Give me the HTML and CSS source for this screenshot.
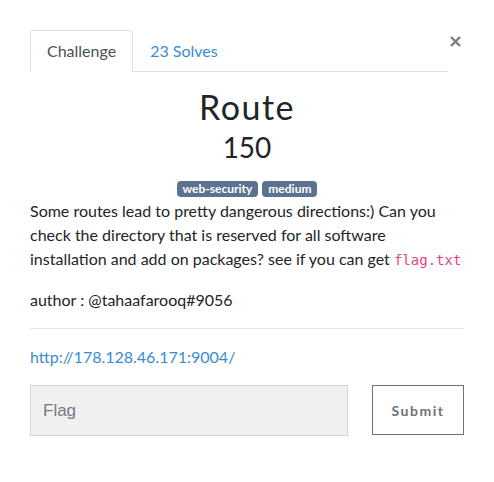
FILE: index.html
```html
<!DOCTYPE html>
<html>
<head>
<meta charset="utf-8">
<link rel="stylesheet" href="styles.css">
</head>
<body>
<div class="modal">
  <div class="head">
    <ul class="tabs">
      <li class="tab active">Challenge</li>
      <li class="tab"><a href="#">23 Solves</a></li>
    </ul>
    <button class="close" aria-label="Close">
      <svg width="11" height="11" viewBox="0 0 11 11"><path d="M1 1L10 10M10 1L1 10" stroke="#7d7d7d" stroke-width="2.4" stroke-linecap="butt"/></svg>
    </button>
  </div>
  <h2 class="title">Route</h2>
  <h3 class="value">150</h3>
  <div class="tags">
    <span class="badge">web-security</span>
    <span class="badge">medium</span>
  </div>
  <p class="desc">Some routes lead to pretty dangerous directions:) Can you check the directory that is reserved for all software installation and add on packages? see if you can get <code>flag.txt</code></p>
  <p class="desc">author : @tahaafarooq#9056</p>
  <hr class="sep">
  <a class="link" href="#">http://178.128.46.171:9004/</a>
  <form class="submit-row">
    <input class="flag" type="text" placeholder="Flag">
    <button class="btn" type="button">Submit</button>
  </form>
</div>
</body>
</html>
```
FILE: styles.css
```css
* { box-sizing: border-box; }
html, body { margin: 0; padding: 0; background: #fff; }
body { font-family: "Lato", "Liberation Sans", sans-serif; color: #212529; }
.modal { width: 494px; padding: 30px 30px 0 30px; }
.head { display: flex; align-items: flex-start; }
.tabs {
  list-style: none; margin: 0; padding: 0; display: flex;
  width: 420px; border-bottom: 1px solid #dee2e6;
}
.tab {
  font-size: 16px; line-height: 24px; padding: 8px 16px;
  border: 1px solid transparent; border-bottom: 0; border-radius: 4px 4px 0 0;
  margin-bottom: -1px; color: #495057;
}
.tab.active { border-color: #dee2e6; background: #fff; padding-bottom: 9px; }
.tab a { color: #3b8bd0; text-decoration: none; }
.close {
  margin-left: auto; background: none; border: 0; padding: 0;
  width: 14px; height: 14px; display: flex; align-items: center; justify-content: center;
  margin-top: 4px; margin-right: 2px; cursor: pointer;
}
.title {
  font-family: "Lato", sans-serif; font-weight: 400; font-size: 34px; line-height: 40px;
  letter-spacing: 1.5px; text-align: center; margin: 15px 0 0 0; color: #212529;
}
.value {
  font-weight: 400; font-size: 28px; line-height: 34px; text-align: center;
  margin: 3px 0 0 0; color: #212529;
}
.tags { display: flex; justify-content: center; gap: 4px; margin-top: 17px; }
.badge {
  background: #5b7290; color: #fff; font-size: 12px; font-weight: 700;
  line-height: 16px; padding: 0 6px; border-radius: 4px;
}
.desc { font-size: 16px; line-height: 24px; margin: 2px 0 16px 0; }
.desc + .desc { margin-top: 15px; }
code {
  font-family: "DejaVu Sans Mono", "Liberation Mono", monospace; font-size: 14px; color: #e83e8c;
}
.sep { border: 0; border-top: 1px solid #e3e3e3; margin: 15px 0 0 0; }
.link {
  display: block; margin-top: 16px; font-size: 16px; line-height: 24px;
  color: #3b8bd0; text-decoration: none;
}
.submit-row { display: flex; gap: 24px; margin-top: 16px; }
.flag {
  width: 318px; height: 51px; background: #f0f0f0; border: 1px solid #d3d6da;
  padding: 0 12px; font-family: "Liberation Sans", Arial, sans-serif; font-size: 17px; color: #495057;
}
.flag::placeholder { color: #737a82; }
.btn {
  width: 92px; height: 50px; background: #fff; border: 1px solid #6c737b;
  font-family: "Lato", sans-serif; font-weight: 700; font-size: 14px; letter-spacing: 1.5px;
  color: #6c737b;
}
```
